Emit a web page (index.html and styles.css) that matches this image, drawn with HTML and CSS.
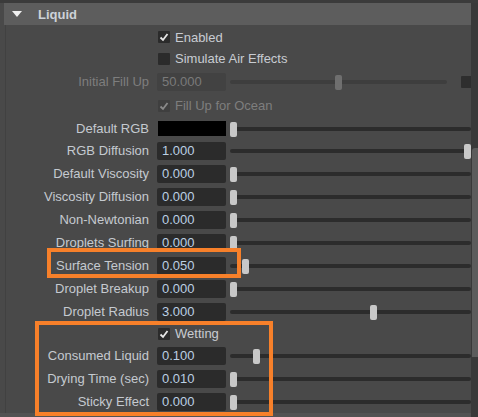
FILE: index.html
```html
<html lang="en">
<head>
    <meta charset="UTF-8"/>
    <title>Liquid</title>
    <link rel="stylesheet" href="styles.css">
</head>
<body>

<div class="top_strip"></div>

<div class="panel">
    <div class="attrs">
        <div class="frame_header">
            <span class="arrow"></span>
            <span class="frame_title">Liquid</span>
        </div>

        <div class="rows">
            <div class="row h22">
                <span></span>
                <label class="check"><span class="box"><svg viewBox="0 0 12 12"><polyline points="2.5,6.5 5,9 9.5,3"/></svg></span>Enabled</label>
            </div>
            <div class="row h21">
                <span></span>
                <label class="check"><span class="box"></span>Simulate Air Effects</label>
            </div>
            <div class="row h25 disabled">
                <span class="name">Initial Fill Up</span>
                <span class="field">50.000</span>
                <div class="slider_wrap">
                    <div class="slider" style="--v:0.5"><div class="track"></div><div class="thumb"></div></div>
                    <span class="mini_swatch"></span>
                </div>
            </div>
            <div class="row h23 disabled">
                <span></span>
                <label class="check"><span class="box"><svg viewBox="0 0 12 12"><polyline points="2.5,6.5 5,9 9.5,3"/></svg></span>Fill Up for Ocean</label>
            </div>
            <div class="row h22">
                <span class="name">Default RGB</span>
                <span class="swatch"></span>
                <div class="slider" style="--v:0"><div class="track"></div><div class="thumb"></div></div>
            </div>
            <div class="row">
                <span class="name">RGB Diffusion</span>
                <span class="field">1.000</span>
                <div class="slider" style="--v:1"><div class="track"></div><div class="thumb"></div></div>
            </div>
            <div class="row">
                <span class="name">Default Viscosity</span>
                <span class="field">0.000</span>
                <div class="slider" style="--v:0"><div class="track"></div><div class="thumb"></div></div>
            </div>
            <div class="row">
                <span class="name">Viscosity Diffusion</span>
                <span class="field">0.000</span>
                <div class="slider" style="--v:0"><div class="track"></div><div class="thumb"></div></div>
            </div>
            <div class="row">
                <span class="name">Non-Newtonian</span>
                <span class="field">0.000</span>
                <div class="slider" style="--v:0"><div class="track"></div><div class="thumb"></div></div>
            </div>
            <div class="row">
                <span class="name">Droplets Surfing</span>
                <span class="field">0.000</span>
                <div class="slider" style="--v:0"><div class="track"></div><div class="thumb"></div></div>
            </div>
            <div class="row">
                <span class="name">Surface Tension</span>
                <span class="field">0.050</span>
                <div class="slider" style="--v:0.05"><div class="track"></div><div class="thumb"></div></div>
            </div>
            <div class="row">
                <span class="name">Droplet Breakup</span>
                <span class="field">0.000</span>
                <div class="slider" style="--v:0"><div class="track"></div><div class="thumb"></div></div>
            </div>
            <div class="row">
                <span class="name">Droplet Radius</span>
                <span class="field">3.000</span>
                <div class="slider" style="--v:0.6"><div class="track"></div><div class="thumb"></div></div>
            </div>
            <div class="row h21">
                <span></span>
                <label class="check"><span class="box"><svg viewBox="0 0 12 12"><polyline points="2.5,6.5 5,9 9.5,3"/></svg></span>Wetting</label>
            </div>
            <div class="row">
                <span class="name">Consumed Liquid</span>
                <span class="field">0.100</span>
                <div class="slider" style="--v:0.1"><div class="track"></div><div class="thumb"></div></div>
            </div>
            <div class="row">
                <span class="name">Drying Time (sec)</span>
                <span class="field">0.010</span>
                <div class="slider" style="--v:0"><div class="track"></div><div class="thumb"></div></div>
            </div>
            <div class="row">
                <span class="name">Sticky Effect</span>
                <span class="field">0.000</span>
                <div class="slider" style="--v:0"><div class="track"></div><div class="thumb"></div></div>
            </div>
        </div>
        <div class="bottom_bar"></div>
    </div>

    <div class="scrollbar">
        <div class="scroll_thumb"></div>
    </div>
</div>

<!-- highlight frames drawn over the attribute rows -->
<div class="highlight surface"></div>
<div class="highlight wetting"></div>

</body>
</html>
```

FILE: styles.css
```css
body {
    margin: 0;
    width: 478px;
    height: 417px;
    overflow: hidden;
    position: relative;
    background: #494949;
    font-family: 'Liberation Sans', Arial, sans-serif;
    font-size: 13px;
    color: #c6c6c6;
}

.top_strip {
    height: 3px;
    background: #3b3b3b;
}

.panel {
    display: flex;
    height: 414px;
}

.attrs {
    flex: 1;
    display: flex;
    flex-direction: column;
}

.frame_header {
    height: 22px;
    margin-left: 4px;
    background: #5d5d5d;
    display: flex;
    align-items: center;
}

.arrow {
    margin-left: 8px;
    width: 0;
    height: 0;
    border-left: 5.5px solid transparent;
    border-right: 5.5px solid transparent;
    border-top: 6px solid #f0f0f0;
}

.frame_title {
    margin-left: 16px;
    font-weight: bold;
    color: #cdd2d8;
}

.rows {
    flex: 1;
    padding-top: 1px;
    margin-left: 5px;
    border-left: 1px solid #414141;
}

.row {
    display: grid;
    grid-template-columns: 151px 79px 1fr;
    align-items: center;
    height: 23px;
    margin-left: -6px;
}

.h21 { height: 21px; }
.h22 { height: 22px; }
.h23 { height: 23px; }
.h25 { height: 25px; }

.name {
    text-align: right;
    padding-right: 2px;
    white-space: nowrap;
    color: #c5cad0;
}

.field {
    margin-left: 6px;
    width: 64px;
    height: 18px;
    line-height: 18px;
    padding-left: 5px;
    background: #2b2b2b;
    border-radius: 2px;
    color: #bcd0e4;
}

.swatch {
    margin-left: 7px;
    width: 68px;
    height: 15px;
    background: #000;
}

.check {
    grid-column: 2 / 4;
    display: flex;
    align-items: center;
    margin-left: 7px;
    color: #c8ccd2;
}

.box {
    width: 12px;
    height: 12px;
    margin-right: 5px;
    background: #2b2b2b;
    border-radius: 1px;
}

.box svg {
    display: block;
    width: 12px;
    height: 12px;
}

.box polyline {
    fill: none;
    stroke: #e6e6e6;
    stroke-width: 1.8;
}

.slider {
    position: relative;
    height: 23px;
    display: flex;
    align-items: center;
}

.slider_wrap {
    display: flex;
    align-items: center;
}

.slider_wrap .slider {
    flex: 1;
}

.track {
    width: 100%;
    height: 4px;
    background: #2c2c2c;
    border-radius: 2px;
}

.thumb {
    position: absolute;
    top: 50%;
    left: calc(var(--v) * (100% - 7px));
    width: 7px;
    height: 15px;
    margin-top: -7px;
    background: #c8c8c8;
    border-radius: 2px;
}

.mini_swatch {
    margin-left: 14px;
    width: 10px;
    height: 12px;
    background: #2e2e2e;
    border-radius: 1px 0 0 1px;
}

/* greyed-out rows */
.disabled .name,
.disabled .check {
    color: #7e7e7e;
}

.disabled .field {
    background: #424242;
    color: #7a7a7a;
}

.disabled .track {
    background: #3e3e3e;
}

.disabled .thumb {
    background: #6f6f6f;
}

.disabled .box {
    background: #3f3f3f;
}

.disabled .box polyline {
    stroke: #8a8a8a;
}

.bottom_bar {
    height: 4px;
    background: #525252;
}

.scrollbar {
    width: 7px;
    background: #393939;
}

.scroll_thumb {
    margin-top: 145px;
    margin-left: 1px;
    height: 209px;
    background: #5c5c5c;
    border-radius: 3px 0 0 0;
}

.highlight {
    position: absolute;
    border: 4px solid #f7802a;
    box-sizing: border-box;
}

.highlight.surface {
    left: 47px;
    top: 248px;
    width: 194px;
    height: 30px;
}

.highlight.wetting {
    left: 35px;
    top: 321px;
    width: 238px;
    height: 95px;
}
```
